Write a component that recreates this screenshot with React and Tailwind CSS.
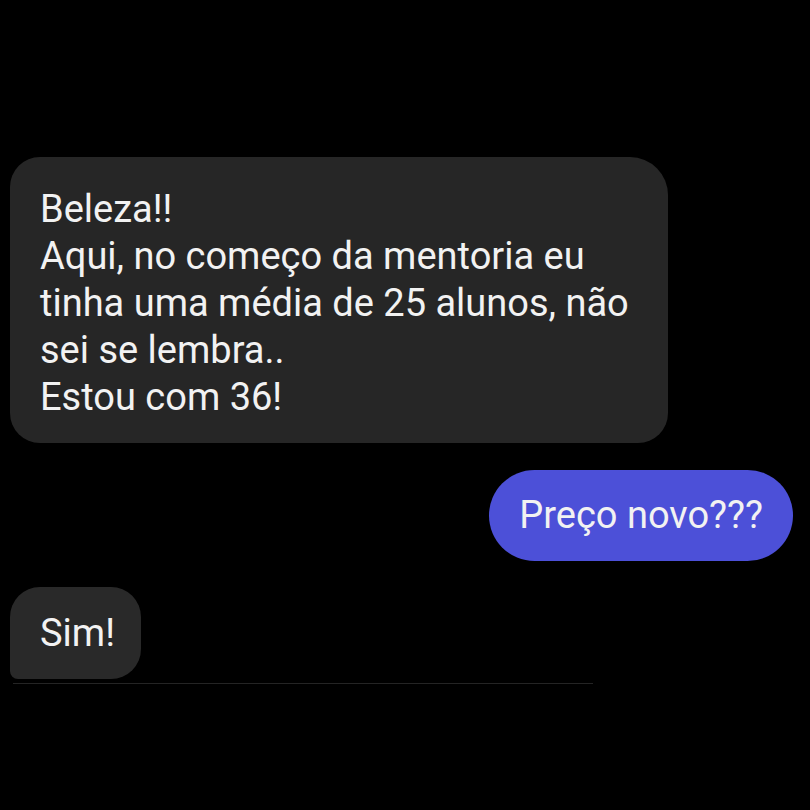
export default function App() {
  return (
    <div className="w-[810px] h-[810px] bg-black text-[#f2f2f2] font-['Roboto',sans-serif] text-[38px] leading-[47px] flex flex-col pt-[157px]">
      {/* incoming message */}
      <div className="ml-[10px] w-[658px] rounded-[30px] rounded-tr-[38px] bg-[#262626] px-[30px] pt-[29px] pb-[22px]">
        <p>Beleza!!</p>
        <p>Aqui, no começo da mentoria eu</p>
        <p>tinha uma média de 25 alunos, não</p>
        <p>sei se lembra..</p>
        <p>Estou com 36!</p>
      </div>

      {/* outgoing */}
      <div className="self-end mr-[17px] mt-[27px] h-[91px] flex items-center rounded-full bg-[#4c50d8] px-[30px]">
        Preço novo???
      </div>

      <div className="mt-[26px] ml-[10px] self-start h-[92px] flex items-center rounded-[30px] rounded-bl-[8px] bg-[#292929] pl-[30px] pr-[26px]">
        Sim!
      </div>

      <div className="mt-[4px] ml-[13px] w-[580px] h-px bg-[#242424]" />
    </div>
  )
}
